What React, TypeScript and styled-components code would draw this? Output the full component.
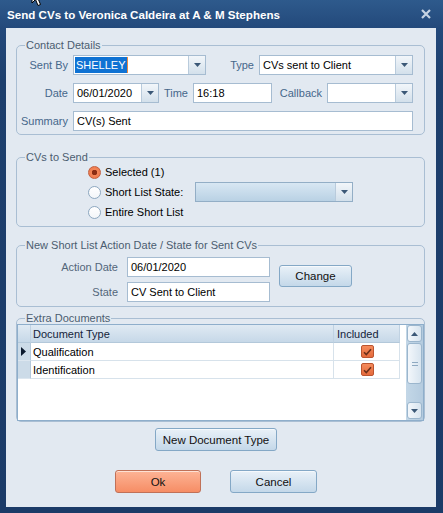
import styled, { createGlobalStyle } from 'styled-components';

const GlobalStyle = createGlobalStyle`
  html, body { margin: 0; padding: 0; }
  body {
    font-family: 'Liberation Sans', Arial, sans-serif;
    font-size: 11px;
  }
`;

const Window = styled.div`
  position: relative;
  width: 443px;
  height: 513px;
  box-sizing: border-box;
  padding: 0 7px 6px 6px;
  display: flex;
  flex-direction: column;
  overflow: hidden;
  background: linear-gradient(#2e5a8c 0, #23497b 28px, #1d3f6d 80px, #1b3b68 100%);
`;

const TitleBar = styled.div`
  height: 28px;
  flex: none;
  display: flex;
  align-items: center;
  justify-content: space-between;
  padding: 0 5px 0 1px;
  color: #fff;
  font-weight: bold;
  font-size: 11.6px;
`;

const Cursor = styled.svg`
  position: absolute;
  left: 31px;
  top: -13px;
`;

const Content = styled.div`
  flex: 1;
  background: #e2e9f1;
  padding: 0 11px 0 10px;
  display: flex;
  flex-direction: column;
`;

const Group = styled.fieldset<{ $mt: number }>`
  margin: ${p => p.$mt}px 0 0 0;
  padding: 0;
  min-width: 0;
  border: 1px solid #a9bed3;
  border-radius: 5px;
`;

const Legend = styled.legend`
  margin-left: 8px;
  padding: 0 1px;
  line-height: 14px;
  color: #4b5d70;
`;

const ContactBody = styled.div`
  display: flex;
  flex-direction: column;
  gap: 8px;
  padding: 3px 0 3px 0;
`;

const Row = styled.div`
  display: flex;
  align-items: center;
  height: 20px;
`;

const Label = styled.span<{ $w: number }>`
  flex: none;
  width: ${p => p.$w}px;
  box-sizing: border-box;
  padding-right: 5px;
  text-align: right;
  color: #46678b;
  white-space: nowrap;
`;

const Field = styled.div<{ $w: number; $h?: number; $tint?: boolean }>`
  flex: none;
  width: ${p => p.$w}px;
  height: ${p => p.$h ?? 20}px;
  box-sizing: border-box;
  border: 1px solid ${p => (p.$tint ? '#93aec6' : '#a6bcd1')};
  background: ${p => (p.$tint ? 'linear-gradient(#d8e7f3, #b9d1e4)' : '#fff')};
  display: flex;
  align-items: center;
  color: #000;
`;

const FieldText = styled.span`
  flex: 1;
  padding-left: 3px;
  white-space: nowrap;
  overflow: hidden;
`;

const Selected = styled.span`
  align-self: stretch;
  margin: 1px 0 1px 1px;
  padding: 0 1px;
  display: flex;
  align-items: center;
  background: #0f72d3;
  color: #fff;
  border-right: 1px solid #e98a44;
`;

const Spacer = styled.span`
  flex: 1;
`;

const DropButton = styled.span`
  width: 16px;
  align-self: stretch;
  border-left: 1px solid #b9cbdc;
  background: linear-gradient(#f2f6fa, #d3e0eb);
  display: flex;
  align-items: center;
  justify-content: center;
`;

const RadioList = styled.div`
  margin-top: -2px;
  padding: 0 0 4px 71px;
  display: flex;
  flex-direction: column;
`;

const RadioRow = styled.div`
  display: flex;
  align-items: center;
  height: 20px;
  color: #000;
`;

const RadioDot = styled.span<{ $on?: boolean }>`
  flex: none;
  width: 13px;
  height: 13px;
  box-sizing: border-box;
  border-radius: 50%;
  margin-right: 4px;
  border: 1px solid ${p => (p.$on ? '#c2603f' : '#8ea8c0')};
  background: ${p =>
    p.$on
      ? 'radial-gradient(circle, #8c2e14 0 2.5px, #f38658 3px, #ec7448 100%)'
      : 'linear-gradient(#ffffff, #f3f6f9)'};
`;

const RadioLabel = styled.span<{ $w?: number }>`
  width: ${p => (p.$w ? `${p.$w}px` : 'auto')};
  flex: none;
`;

const ActionBody = styled.div`
  display: grid;
  grid-template-columns: 101px 143px auto;
  grid-template-rows: 20px 20px;
  column-gap: 9px;
  row-gap: 5px;
  padding: 5px 0 4px 0;
  align-items: center;
`;

const GreyLabel = styled.span`
  text-align: right;
  color: #53667a;
`;

const Button = styled.button<{ $w: number; $h?: number; $primary?: boolean }>`
  width: ${p => p.$w}px;
  height: ${p => p.$h ?? 23}px;
  box-sizing: border-box;
  padding: 0;
  border-radius: 3px;
  border: 1px solid ${p => (p.$primary ? '#c07158' : '#84a8c6')};
  background: ${p =>
    p.$primary
      ? 'linear-gradient(#fdb496, #f68d65)'
      : 'linear-gradient(#e9f1f8, #c4d8e9)'};
  box-shadow: inset 0 1px 0 rgba(255, 255, 255, 0.6);
  font-family: 'Liberation Sans', Arial, sans-serif;
  font-size: 11.5px;
  color: #111;
`;

const ChangeButton = styled(Button)`
  grid-column: 3;
  grid-row: 1 / span 2;
  align-self: start;
  margin-top: 8px;
`;

const GridFrame = styled.div`
  margin-top: -1px;
  height: 97px;
  box-sizing: border-box;
  border: 1px solid #8eaecb;
  display: flex;
  background: #fff;
`;

const Table = styled.div`
  flex: 1;
  display: grid;
  grid-template-columns: 13px 303px 66px 1fr;
  grid-auto-rows: 18px;
  align-content: start;
`;

const HeadCell = styled.div<{ $pl?: number; $blank?: boolean }>`
  box-sizing: border-box;
  padding-left: ${p => p.$pl ?? 2}px;
  display: flex;
  align-items: center;
  color: #14233a;
  background: ${p => (p.$blank ? '#fff' : 'linear-gradient(#e0eaf3, #c6d8e8)')};
  border-right: ${p => (p.$blank ? 'none' : '1px solid #c0d2e2')};
  border-bottom: ${p => (p.$blank ? 'none' : '1px solid #b3c8da')};
`;

const RowHead = styled.div`
  box-sizing: border-box;
  background: #ccdbe8;
  border-right: 1px solid #b5c9db;
  border-bottom: 1px solid #dce6ef;
  display: flex;
  align-items: center;
  padding-left: 3px;
`;

const Cell = styled.div<{ $center?: boolean }>`
  box-sizing: border-box;
  padding-left: 2px;
  display: flex;
  align-items: center;
  justify-content: ${p => (p.$center ? 'center' : 'flex-start')};
  border-right: 1px solid #d7e2eb;
  border-bottom: 1px solid #d7e2eb;
  color: #000;
`;

const Blank = styled.div``;

const Check = styled.span`
  width: 13px;
  height: 13px;
  box-sizing: border-box;
  border: 1px solid #bb5430;
  border-radius: 2px;
  background: linear-gradient(#f58b5c, #e46a3c);
  display: flex;
  align-items: center;
  justify-content: center;
`;

const ScrollBar = styled.div`
  width: 17px;
  flex: none;
  display: flex;
  flex-direction: column;
  background: linear-gradient(90deg, #c3d7e7, #b4cbdf);
`;

const ScrollPart = styled.div<{ $h: number }>`
  height: ${p => p.$h}px;
  box-sizing: border-box;
  margin: 0 1px;
  border: 1px solid #9bb6cd;
  border-radius: 3px;
  background: linear-gradient(90deg, #f3f7fb, #d7e4ef);
  display: flex;
  align-items: center;
  justify-content: center;
`;

const Track = styled.div`
  flex: 1;
`;

const ButtonRow = styled.div<{ $mt: number }>`
  margin-top: ${p => p.$mt}px;
  padding-right: 9px;
  display: flex;
  justify-content: center;
  gap: 29px;
`;

const Arrow = ({ up }: { up?: boolean }) => (
  <svg width="7" height="4" viewBox="0 0 7 4">
    <path d={up ? 'M0 4 L3.5 0 L7 4 Z' : 'M0 0 L7 0 L3.5 4 Z'} fill="#3b5877" />
  </svg>
);

const Combo = ({ w, children, tint }: { w: number; children?: React.ReactNode; tint?: boolean }) => (
  <Field $w={w} $tint={tint}>
    {children ?? <Spacer />}
    <DropButton>
      <Arrow />
    </DropButton>
  </Field>
);

const Tick = () => (
  <svg width="9" height="8" viewBox="0 0 9 8">
    <path d="M1 4.2 L3.3 6.6 L8 1.2" stroke="#6a2f1a" strokeWidth="1.6" fill="none" />
  </svg>
);

export default function App() {
  return (
    <>
      <GlobalStyle />
      <Window>
        <Cursor width="14" height="21" viewBox="0 0 14 21">
          <path d="M1 1 L1 16 L4.5 12.5 L7 18.5 L9.5 17.5 L7 11.5 L12 11.5 Z" fill="#fff" stroke="#000" strokeWidth="1" />
        </Cursor>
        <TitleBar>
          <span>Send CVs to Veronica Caldeira at A &amp; M Stephens</span>
          <svg width="10" height="10" viewBox="0 0 10 10">
            <path d="M1 1 L9 9 M9 1 L1 9" stroke="#c7d4e3" strokeWidth="2.2" />
          </svg>
        </TitleBar>
        <Content>
          <Group $mt={10}>
            <Legend>Contact Details</Legend>
            <ContactBody>
              <Row>
                <Label $w={56}>Sent By</Label>
                <Combo w={133}>
                  <Selected>SHELLEY</Selected>
                  <Spacer />
                </Combo>
                <Label $w={53}>Type</Label>
                <Combo w={154}>
                  <FieldText>CVs sent to Client</FieldText>
                </Combo>
              </Row>
              <Row>
                <Label $w={56}>Date</Label>
                <Combo w={86}>
                  <FieldText>06/01/2020</FieldText>
                </Combo>
                <Label $w={34}>Time</Label>
                <Field $w={79}>
                  <FieldText>16:18</FieldText>
                </Field>
                <Label $w={55}>Callback</Label>
                <Combo w={86} />
              </Row>
              <Row>
                <Label $w={56}>Summary</Label>
                <Field $w={340}>
                  <FieldText>CV(s) Sent</FieldText>
                </Field>
              </Row>
            </ContactBody>
          </Group>

          <Group $mt={15}>
            <Legend>CVs to Send</Legend>
            <RadioList>
              <RadioRow>
                <RadioDot $on />
                <RadioLabel>Selected (1)</RadioLabel>
              </RadioRow>
              <RadioRow>
                <RadioDot />
                <RadioLabel $w={90}>Short List State:</RadioLabel>
                <Combo w={158} tint />
              </RadioRow>
              <RadioRow>
                <RadioDot />
                <RadioLabel>Entire Short List</RadioLabel>
              </RadioRow>
            </RadioList>
          </Group>

          <Group $mt={11}>
            <Legend>New Short List Action Date / State for Sent CVs</Legend>
            <ActionBody>
              <GreyLabel>Action Date</GreyLabel>
              <Field $w={143}>
                <FieldText>06/01/2020</FieldText>
              </Field>
              <ChangeButton $w={73} $h={22}>Change</ChangeButton>
              <GreyLabel>State</GreyLabel>
              <Field $w={143}>
                <FieldText>CV Sent to Client</FieldText>
              </Field>
            </ActionBody>
          </Group>

          <Group $mt={4}>
            <Legend>Extra Documents</Legend>
            <GridFrame>
              <Table>
                <HeadCell />
                <HeadCell>Document Type</HeadCell>
                <HeadCell $pl={3}>Included</HeadCell>
                <HeadCell $blank />

                <RowHead>
                  <svg width="5" height="9" viewBox="0 0 5 9">
                    <path d="M0 0 L5 4.5 L0 9 Z" fill="#0b1a2e" />
                  </svg>
                </RowHead>
                <Cell>Qualification</Cell>
                <Cell $center>
                  <Check>
                    <Tick />
                  </Check>
                </Cell>
                <Blank />

                <RowHead />
                <Cell>Identification</Cell>
                <Cell $center>
                  <Check>
                    <Tick />
                  </Check>
                </Cell>
                <Blank />
              </Table>
              <ScrollBar>
                <ScrollPart $h={17}>
                  <Arrow up />
                </ScrollPart>
                <ScrollPart $h={41} style={{ marginTop: 1 }}>
                  <svg width="6" height="4" viewBox="0 0 6 4">
                    <path d="M0 0.5 H6 M0 3.5 H6" stroke="#8ea9c1" strokeWidth="1" />
                  </svg>
                </ScrollPart>
                <Track />
                <ScrollPart $h={17} style={{ marginBottom: 1 }}>
                  <Arrow />
                </ScrollPart>
              </ScrollBar>
            </GridFrame>
          </Group>

          <ButtonRow $mt={6}>
            <Button $w={122}>New Document Type</Button>
          </ButtonRow>
          <ButtonRow $mt={19}>
            <Button $w={86} $primary>Ok</Button>
            <Button $w={87}>Cancel</Button>
          </ButtonRow>
        </Content>
      </Window>
    </>
  );
}
